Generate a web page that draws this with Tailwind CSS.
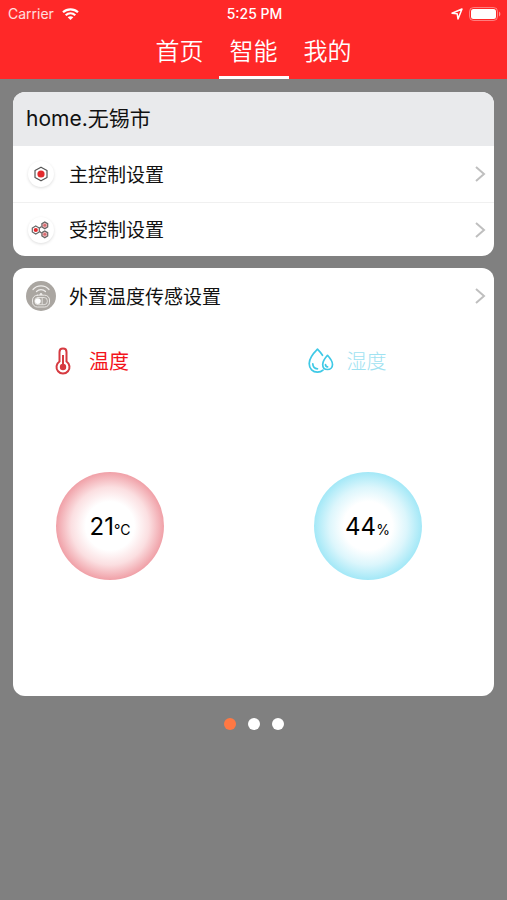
<!DOCTYPE html>
<html lang="zh-CN">
<head>
<meta charset="UTF-8">
<meta name="viewport" content="width=device-width, initial-scale=1">
<title>智能</title>
<script src="https://cdn.jsdelivr.net/npm/@tailwindcss/browser@4"></script>
</head>
<body class="min-h-screen bg-[#808080] font-['Inter','Noto_Sans_CJK_SC',sans-serif] text-[#111]">
<header class="bg-[#ff2828] text-white">
  <div class="grid h-7 grid-cols-3 items-center pr-1.5 pl-2 text-sm leading-4">
    <div class="flex items-center gap-2 text-white/85">
      <span>Carrier</span>
      <svg class="h-3 w-[17px]" viewBox="0 0 17 12" fill="none" stroke="#fff" stroke-width="2.200" aria-label="Wi-Fi">
        <path d="M1 4.300C5.200.3 11.800.3 16 4.300M3.700 7.200C6.500 4.600 10.500 4.600 13.300 7.200"/>
        <path d="M8.500 12 5.700 9.200C7.200 7.800 9.800 7.800 11.300 9.200Z" fill="#fff" stroke="none"/>
      </svg>
    </div>
    <time class="text-center font-medium">5:25 PM</time>
    <div class="flex items-center justify-end gap-1.5">
      <svg class="h-3 w-3" viewBox="0 0 12 12" fill="none" stroke="#fff" stroke-width="1.500" stroke-linejoin="round" aria-label="定位"><path d="M11 1 7 11 6.200 5.800 1 5.200Z"/></svg>
      <svg class="h-[14px] w-8" viewBox="0 0 32 14" aria-label="电池"><rect x=".5" y=".5" width="28" height="13" rx="4" fill="none" stroke="#fff" stroke-opacity=".4"/><rect x="2" y="2" width="25" height="10" rx="2.500" fill="#fff"/><path d="M30 4.500C31.800 5.300 31.800 8.700 30 9.500Z" fill="#fff" fill-opacity=".5"/></svg>
    </div>
  </div>
  <nav class="flex justify-center gap-1 font-['Noto_Sans_CJK_SC',sans-serif] text-2xl font-[350]">
    <a href="#home" class="flex h-[51px] w-[70px] justify-center border-b-3 border-transparent pt-1 leading-9">首页</a>
    <a href="#smart" aria-current="page" class="flex h-[51px] w-[70px] justify-center border-b-3 border-white pt-1 leading-9">智能</a>
    <a href="#mine" class="flex h-[51px] w-[70px] justify-center border-b-3 border-transparent pt-1 leading-9">我的</a>
  </nav>
</header>

<main class="flex flex-col gap-3 px-[13px] pt-[13px]">
  <section class="overflow-hidden rounded-xl bg-white">
    <h1 class="flex h-[54px] items-center bg-[#e9eaec] px-[13px] text-[21px]">home.无锡市</h1>
    <a href="#main-control" class="flex h-14 items-center gap-3 pr-2 pl-3 font-['Noto_Sans_CJK_SC',sans-serif] text-[19px]">
      <span class="flex size-8 items-center justify-center">
        <span class="flex size-[26px] items-center justify-center rounded-full bg-white shadow-[0_1px_3px_#0002]">
          <svg class="size-4" viewBox="0 0 16 16"><path d="M8 1.200 14 4.600V11.400L8 14.800 2 11.400V4.600Z" fill="#fff" stroke="#555" stroke-width="1.200" stroke-linejoin="round"/><circle cx="8" cy="8" r="3.600" fill="#e32b2e"/></svg>
        </span>
      </span>
      <span class="grow">主控制设置</span>
      <svg class="h-[18px] w-3" viewBox="0 0 12 18" fill="none" stroke="#bfbfbf" stroke-width="2"><path d="M2 2 10 9 2 16"/></svg>
    </a>
    <a href="#controlled" class="flex h-[54px] items-center gap-3 border-t border-[#f0f0f0] pr-2 pl-3 font-['Noto_Sans_CJK_SC',sans-serif] text-[19px]">
      <span class="flex size-8 items-center justify-center">
        <span class="flex size-[26px] items-center justify-center rounded-full bg-white shadow-[0_1px_3px_#0002]">
          <svg class="mr-[3px] size-[18px]" viewBox="0 0 18 18" stroke="#666" stroke-width="1.200"><path d="M8 7.500 10.500 5.500M8 10 10.500 12"/><path d="M4.800 5 8.300 7V11L4.800 13 1.300 11V7Z" fill="#fff"/><path d="M13.800 1 16.700 2.700V6L13.800 7.700 10.900 6V2.700ZM13.800 10 16.700 11.700V15L13.800 16.700 10.900 15V11.700Z" fill="#eab6b8"/><circle cx="4.800" cy="9" r="2.100" fill="#e32b2e" stroke="none"/><circle cx="13.800" cy="4.350" r="1.400" fill="#d9686c" stroke="none"/><circle cx="13.800" cy="13.350" r="1.400" fill="#d9686c" stroke="none"/></svg>
        </span>
      </span>
      <span class="grow">受控制设置</span>
      <svg class="h-[18px] w-3" viewBox="0 0 12 18" fill="none" stroke="#bfbfbf" stroke-width="2"><path d="M2 2 10 9 2 16"/></svg>
    </a>
  </section>

  <section class="rounded-xl bg-white pb-[116px]">
    <a href="#sensor" class="flex h-14 items-center gap-3 pr-2 pl-3 font-['Noto_Sans_CJK_SC',sans-serif] text-[19px]">
      <svg class="size-8" viewBox="0 0 32 32" fill="none" stroke="#efedeb" stroke-linecap="round">
        <circle cx="16" cy="16" r="15" fill="#aaa6a1" stroke="none"/>
        <path d="M8 9.500C12 4.700 20 4.700 24 9.500M11.500 11.500C14 9 18 9 20.500 11.500" stroke-width="1.200"/>
        <path d="M14.500 14.800C14.500 12.800 17.500 12.800 17.500 14.800Z" fill="#fff" stroke="none"/>
        <rect x="7.500" y="15.200" width="17" height="11.800" rx="4.800" stroke-width=".9"/>
        <rect x="9.800" y="17.500" width="12.500" height="7.200" rx="3.200" stroke-width=".8"/>
        <circle cx="12.900" cy="21.100" r="2.900" fill="#fff" stroke="none"/>
        <path d="M17.200 18V24.200" stroke-width=".8"/>
      </svg>
      <span class="grow">外置温度传感设置</span>
      <svg class="h-[18px] w-3" viewBox="0 0 12 18" fill="none" stroke="#bfbfbf" stroke-width="2"><path d="M2 2 10 9 2 16"/></svg>
    </a>
    <div class="grid grid-cols-2 gap-[34px] pt-[22px]">
      <div class="flex flex-col gap-24 pl-9">
        <h2 class="flex h-[30px] items-center gap-3 font-['Noto_Sans_CJK_SC',sans-serif] text-xl text-[#f3141c]">
          <svg class="size-7" viewBox="0 0 28 28" fill="none" stroke="#d63a40" stroke-width="2">
            <path d="M10.500 14.500V5C10.500.4 17.500.4 17.500 5V14.500A6.500 6.500 0 1 1 10.500 14.500Z"/>
            <path d="M14 8V20"/><circle cx="14" cy="20" r="3.200" fill="#d63a40" stroke="none"/>
          </svg>
          温度
        </h2>
        <div class="ml-[7px] flex size-27 items-center justify-center rounded-full bg-[radial-gradient(closest-side,#fff_45%,#fbdfe1_72%,#f0a0a7_100%)] text-black">
          <p class="pt-0.5 text-2xl">21<span class="text-sm">°C</span></p>
        </div>
      </div>
      <div class="flex flex-col gap-24 pl-9">
        <h2 class="flex h-[30px] items-center gap-3 font-['Noto_Sans_CJK_SC',sans-serif] text-xl font-light text-[#9fe2f1]">
          <svg class="size-7" viewBox="0 0 28 28" fill="none" stroke="#3fc9e6" stroke-width="1.700" stroke-linecap="round" stroke-linejoin="round">
            <path d="M15.500 8.300C13.600 5.200 11.200 2.900 10.500 2.200 8.800 3.900 2.200 10.700 2.200 16.500 2.200 21.800 5.800 25.200 10.500 25.200 12.700 25.200 14.600 24.500 16 23.200"/>
            <path d="M20.500 8.300C18.700 10.300 15.700 13.900 15.700 17.400 15.700 20.600 17.700 22.500 20.500 22.500 23.300 22.500 25.500 20.600 25.500 17.400 25.500 13.900 22.300 10.300 20.500 8.300Z"/>
            <path d="M5.800 16.800C5.900 19.600 7.700 21.700 10.500 21.800M18.500 17.500C18.500 18.800 19.400 19.800 20.600 19.800"/>
          </svg>
          湿度
        </h2>
        <div class="ml-[7px] flex size-27 items-center justify-center rounded-full bg-[radial-gradient(closest-side,#fff_45%,#dcf6fc_72%,#a3e8f7_100%)] text-black">
          <p class="pt-0.5 text-2xl">44<span class="text-sm">%</span></p>
        </div>
      </div>
    </div>
  </section>

  <div class="flex justify-center gap-3 pt-[10px]">
    <button aria-label="第1页" aria-current="true" class="size-3 rounded-full bg-[#ff7843]"></button>
    <button aria-label="第2页" class="size-3 rounded-full bg-white"></button>
    <button aria-label="第3页" class="size-3 rounded-full bg-white"></button>
  </div>
</main>
</body>
</html>
